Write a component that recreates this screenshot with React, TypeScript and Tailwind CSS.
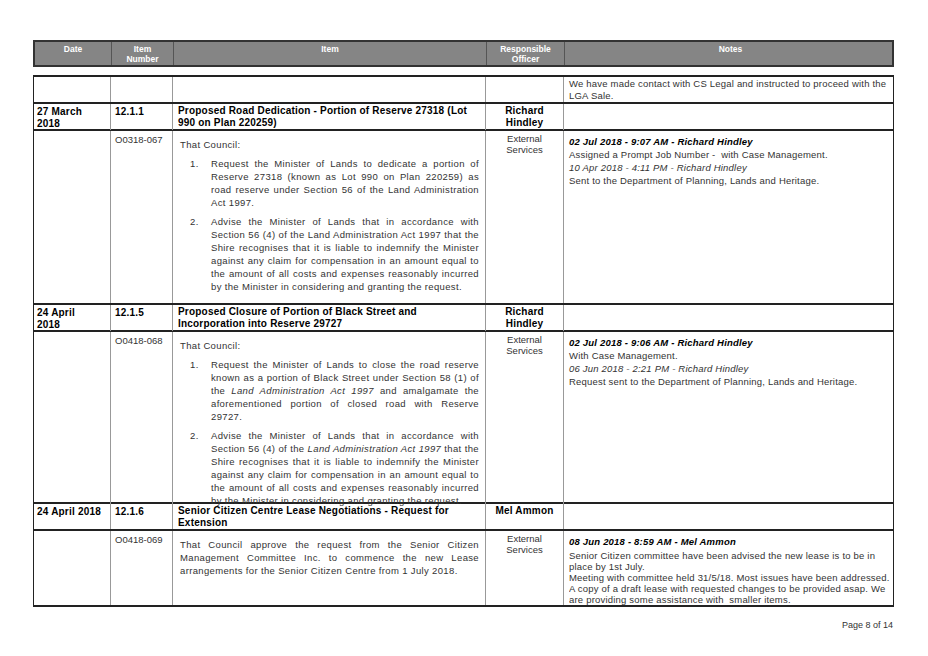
import React from "react";

const cols = "grid grid-cols-[77px_62px_313px_78px_331px]";
const ff = { fontFamily: '"Liberation Sans", Arial, sans-serif' };

function Head({ d, n, t, o }: { d: string; n: string; t: string; o: string }) {
  return (
    <div className={`${cols} border-t-2 border-[#222] text-[10px] font-bold text-black leading-[12px] h-[27px] tracking-[0.2px]`}>
      <div className="pl-[3px] pr-[22px] pt-[2px] border-r border-[#999]">{d}</div>
      <div className="px-[4px] pt-[2px] border-r border-[#999]">{n}</div>
      <div className="px-[5px] pt-[1px] border-r border-[#999]">{t}</div>
      <div className="text-center px-[14px] pt-[1px] border-r border-[#999]">{o}</div>
      <div></div>
    </div>
  );
}

function Detail({ code, h, body, notes }: { code: string; h: number; body: React.ReactNode; notes: React.ReactNode }) {
  return (
    <div className={`${cols} border-t-2 border-[#222] text-[9.5px] leading-[13px] text-[#333] tracking-[0.35px]`} style={{ height: h }}>
      <div className="border-r border-[#999]"></div>
      <div className="px-[4px] pt-[2px] border-r border-[#999] tracking-normal">{code}</div>
      <div className="pl-[7px] pr-[6px] pt-[7px] border-r border-[#999] text-justify">{body}</div>
      <div className="text-center pt-[2px] border-r border-[#999] leading-[11px] tracking-normal">External<br />Services</div>
      <div className="px-[5px] pt-[4px] tracking-[0.2px]">{notes}</div>
    </div>
  );
}

function Li({ n, children }: { n: string; children: React.ReactNode }) {
  return (
    <div className="flex mt-[6px]">
      <div className="w-[31px] pl-[10px] shrink-0">{n}</div>
      <div className="flex-1">{children}</div>
    </div>
  );
}

export default function App() {
  return (
    <div className="w-[928px] h-[656px] bg-white relative" style={ff}>
      <div className="absolute left-[33px] top-[40px] w-[861px]">
        <div className={`${cols} h-[27px] bg-[#858585] border-2 border-[#333] text-white font-bold text-[8.5px] leading-[10px] text-center`}>
          <div className="pt-[2px] border-r border-[#555]">Date</div>
          <div className="pt-[2px] border-r border-[#555]">Item<br />Number</div>
          <div className="pt-[2px] border-r border-[#555]">Item</div>
          <div className="pt-[2px] border-r border-[#555]">Responsible<br />Officer</div>
          <div className="pt-[2px]">Notes</div>
        </div>
        <div className="mt-[8px] border-b-2 border-l border-r border-[#222] border-l-[#222]">
          <div className={`${cols} border-t-2 border-[#222] h-[27px] text-[9.5px] leading-[12px] text-[#333] tracking-[0.2px]`}>
            <div className="border-r border-[#999]"></div>
            <div className="border-r border-[#999]"></div>
            <div className="border-r border-[#999]"></div>
            <div className="border-r border-[#999]"></div>
            <div className="px-[5px] pt-[1px]">We have made contact with CS Legal and instructed to proceed with the LGA Sale.</div>
          </div>
          <Head d="27 March 2018" n="12.1.1" t="Proposed Road Dedication - Portion of Reserve 27318 (Lot 990 on Plan 220259)" o="Richard Hindley" />
          <Detail
            code="O0318-067"
            h={174}
            body={
              <>
                <div>That Council:</div>
                <Li n="1.">Request the Minister of Lands to dedicate a portion of Reserve 27318 (known as Lot 990 on Plan 220259) as road reserve under Section 56 of the Land Administration Act 1997.</Li>
                <Li n="2.">Advise the Minister of Lands that in accordance with Section 56 (4) of the Land Administration Act 1997 that the Shire recognises that it is liable to indemnify the Minister against any claim for compensation in an amount equal to the amount of all costs and expenses reasonably incurred by the Minister in considering and granting the request.</Li>
              </>
            }
            notes={
              <>
                <div className="font-bold italic text-black">02 Jul 2018 - 9:07 AM - Richard Hindley</div>
                <div>Assigned a Prompt Job Number -&nbsp; with Case Management.</div>
                <div className="italic">10 Apr 2018 - 4:11 PM - Richard Hindley</div>
                <div>Sent to the Department of Planning, Lands and Heritage.</div>
              </>
            }
          />
          <Head d="24 April 2018" n="12.1.5" t="Proposed Closure of Portion of Black Street and Incorporation into Reserve 29727" o="Richard Hindley" />
          <Detail
            code="O0418-068"
            h={172}
            body={
              <>
                <div>That Council:</div>
                <Li n="1.">Request the Minister of Lands to close the road reserve known as a portion of Black Street under Section 58 (1) of the <i>Land Administration Act 1997</i> and amalgamate the aforementioned portion of closed road with Reserve 29727.</Li>
                <Li n="2.">Advise the Minister of Lands that in accordance with Section 56 (4) of the <i>Land Administration Act 1997</i> that the Shire recognises that it is liable to indemnify the Minister against any claim for compensation in an amount equal to the amount of all costs and expenses reasonably incurred by the Minister in considering and granting the request.</Li>
              </>
            }
            notes={
              <>
                <div className="font-bold italic text-black">02 Jul 2018 - 9:06 AM - Richard Hindley</div>
                <div>With Case Management.</div>
                <div className="italic">06 Jun 2018 - 2:21 PM - Richard Hindley</div>
                <div>Request sent to the Department of Planning, Lands and Heritage.</div>
              </>
            }
          />
          <div className={`${cols} border-t-2 border-[#222] text-[10px] font-bold text-black leading-[12px] h-[27px] tracking-[0.2px]`}>
            <div className="pl-[3px] pt-[2px] border-r border-[#999]">24 April 2018</div>
            <div className="px-[4px] pt-[2px] border-r border-[#999]">12.1.6</div>
            <div className="px-[5px] pt-[1px] border-r border-[#999]">Senior Citizen Centre Lease Negotiations - Request for Extension</div>
            <div className="text-center pt-[1px] border-r border-[#999]">Mel Ammon</div>
            <div></div>
          </div>
          <Detail
            code="O0418-069"
            h={76}
            body={<div>That Council approve the request from the Senior Citizen Management Committee Inc. to commence the new Lease arrangements for the Senior Citizen Centre from 1 July 2018.</div>}
            notes={
              <div className="h-[70px] overflow-hidden leading-[11px]">
                <div className="font-bold italic text-black leading-[13px]">08 Jun 2018 - 8:59 AM - Mel Ammon</div>
                <div className="mt-[2px]">Senior Citizen committee have been advised the new lease is to be in place by 1st July.</div>
                <div>Meeting with committee held 31/5/18. Most issues have been addressed. A copy of a draft lease with requested changes to be provided asap. We are providing some assistance with&nbsp; smaller items.</div>
              </div>
            }
          />
        </div>
      </div>
      <div className="absolute right-[35px] top-[619px] text-[9px] text-[#333]">Page 8 of 14</div>
    </div>
  );
}
